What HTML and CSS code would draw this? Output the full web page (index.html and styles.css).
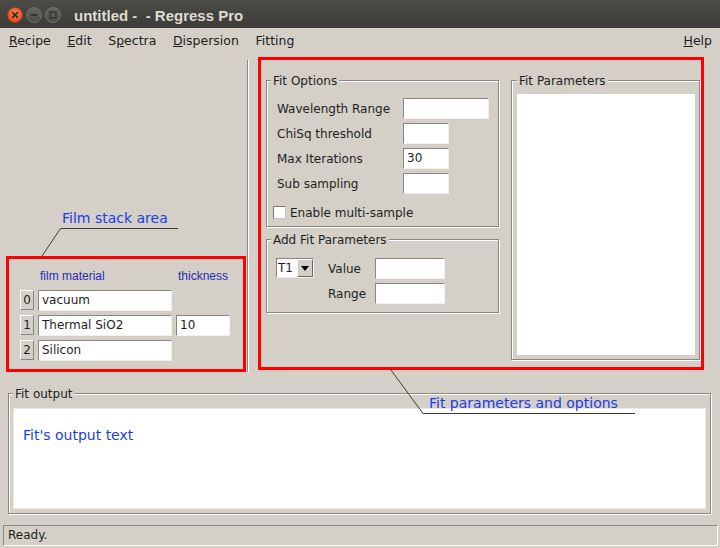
FILE: index.html
```html
<!DOCTYPE html>
<html>
<head>
<meta charset="utf-8">
<title>Regress Pro</title>
<link rel="stylesheet" href="styles.css">
</head>
<body>
<div class="window">
  <div class="titlebar">
    <div class="wbtns">
      <svg class="wbtn" viewBox="0 0 16 16">
        <defs>
          <radialGradient id="gc" cx="50%" cy="40%" r="60%">
            <stop offset="0" stop-color="#f4865a"/>
            <stop offset="1" stop-color="#dc4a18"/>
          </radialGradient>
          <linearGradient id="gg" x1="0" y1="0" x2="0" y2="1">
            <stop offset="0" stop-color="#65645f"/>
            <stop offset="1" stop-color="#4f4e4a"/>
          </linearGradient>
        </defs>
        <circle cx="8" cy="8" r="7.5" fill="url(#gc)" stroke="#b03d12" stroke-width="0.8"/>
        <path d="M5.6 5.6 L10.4 10.4 M10.4 5.6 L5.6 10.4" stroke="#3a2219" stroke-width="1.5" stroke-linecap="round"/>
      </svg>
      <svg class="wbtn" viewBox="0 0 16 16">
        <circle cx="8" cy="8" r="7.5" fill="url(#gg)" stroke="#77766f" stroke-width="0.8"/>
        <path d="M4.8 8 H11.2" stroke="#2f2e2b" stroke-width="1.8"/>
      </svg>
      <svg class="wbtn" viewBox="0 0 16 16">
        <circle cx="8" cy="8" r="7.5" fill="url(#gg)" stroke="#77766f" stroke-width="0.8"/>
        <rect x="5" y="5" width="6" height="6" fill="none" stroke="#2f2e2b" stroke-width="1.3"/>
      </svg>
    </div>
    <span class="title">untitled -&nbsp; - Regress Pro</span>
  </div>

  <div class="menubar">
    <span class="mi"><u>R</u>ecipe</span>
    <span class="mi"><u>E</u>dit</span>
    <span class="mi">S<u>p</u>ectra</span>
    <span class="mi"><u>D</u>ispersion</span>
    <span class="mi">Fitting</span>
    <span class="mi help"><u>H</u>elp</span>
  </div>

  <div class="main">
    <div class="left">
      <div class="stack redbox">
        <div class="stack-grid">
          <span></span><span class="hdr">film material</span><span class="hdr">thickness</span>
          <span class="idx">0</span><span class="entry">vacuum</span><span></span>
          <span class="idx">1</span><span class="entry">Thermal SiO2</span><span class="entry">10</span>
          <span class="idx">2</span><span class="entry">Silicon</span><span></span>
        </div>
      </div>
    </div>

    <div class="sep"></div>

    <div class="fit redbox">
      <div class="fit-col">
        <div class="group opts">
          <span class="gtitle">Fit Options</span>
          <div class="form">
            <span class="lbl">Wavelength Range</span><span class="entry w86"></span>
            <span class="lbl">ChiSq threshold</span><span class="entry w46"></span>
            <span class="lbl">Max Iterations</span><span class="entry w46">30</span>
            <span class="lbl">Sub sampling</span><span class="entry w46"></span>
          </div>
          <div class="check"><span class="cbox"></span><span>Enable multi-sample</span></div>
        </div>

        <div class="group addp">
          <span class="gtitle">Add Fit Parameters</span>
          <div class="add-grid">
            <div class="combo"><span class="combo-text">T1</span><span class="combo-btn"><span class="tri"></span></span></div>
            <span class="lbl">Value</span><span class="entry w70"></span>
            <span></span>
            <span class="lbl">Range</span><span class="entry w70"></span>
          </div>
        </div>
      </div>

      <div class="group params">
        <span class="gtitle">Fit Parameters</span>
        <div class="listbox"></div>
      </div>
    </div>
  </div>

  <div class="group output">
    <span class="gtitle">Fit output</span>
    <div class="textarea"><span class="outtext">Fit's output text</span></div>
  </div>

  <div class="status">Ready.</div>

  <svg class="lines" width="720" height="548" viewBox="0 0 720 548">
    <polyline points="178,228.5 60.5,228.5 42,256" fill="none" stroke="#3b3b3b" stroke-width="1"/>
    <polyline points="391,370 423,413.5 635,413.5" fill="none" stroke="#3b3b3b" stroke-width="1"/>
  </svg>
  <span class="annot a1">Film stack area</span>
  <span class="annot a2">Fit parameters and options</span>
</div>
</body>
</html>
```

FILE: styles.css
```css
* { box-sizing: border-box; }
html, body { margin: 0; padding: 0; }
body {
  background: #d4d0c8;
  font-family: "DejaVu Sans", sans-serif;
  font-size: 12px;
  color: #1e1e1e;
}
.window {
  position: relative;
  width: 720px;
  height: 548px;
  overflow: hidden;
  display: flex;
  flex-direction: column;
  background: #d4d0c8;
}

/* title bar */
.titlebar {
  height: 28px;
  flex: none;
  display: flex;
  align-items: center;
  padding: 2px 0 0 7px;
  background: linear-gradient(#4c4b46, #3c3b37);
}
.wbtns { display: flex; gap: 3px; }
.wbtn { display: block; width: 16px; height: 16px; }
.title {
  margin-left: 13px;
  font-family: "Liberation Sans", sans-serif;
  font-weight: bold;
  font-size: 15px;
  color: #dfdbd2;
  white-space: pre;
}

/* menu */
.menubar {
  height: 24px;
  flex: none;
  display: flex;
  align-items: center;
  gap: 16.6px;
  padding: 0 8px 0 9px;
  font-size: 12.5px;
  color: #1c1c1c;
}
.menubar .help { margin-left: auto; }

/* main */
.main {
  height: 328px;
  flex: none;
  display: flex;
  align-items: flex-start;
}
.left {
  width: 247px;
  height: 100%;
  display: flex;
  flex-direction: column;
  justify-content: flex-end;
  padding: 0 0 8px 6px;
}
.redbox { border: 3px solid #ff0000; }
.stack {
  width: 240px;
  height: 116px;
  padding: 10px 0 0 11px;
}
.stack-grid {
  display: grid;
  grid-template-columns: 14px 134px 54px;
  column-gap: 4px;
  row-gap: 4px;
}
.hdr {
  font-family: "Liberation Sans", sans-serif;
  font-size: 12px;
  line-height: 14px;
  color: #2a2ab0;
  padding-left: 2px;
  margin-bottom: 3px;
  white-space: nowrap;
}
.idx {
  height: 20px;
  border: 1px solid;
  border-color: #ffffff #8a8782 #8a8782 #ffffff;
  display: flex;
  align-items: center;
  justify-content: center;
  line-height: 1;
}
.entry {
  height: 21px;
  background: #ffffff;
  border: 1px solid;
  border-color: #8a8782 #f2f1ee #f2f1ee #8a8782;
  padding: 0 0 0 3px;
  line-height: 19px;
  white-space: nowrap;
}
.w86 { width: 86px; }
.w46 { width: 46px; }
.w70 { width: 70px; }

.sep {
  width: 2px;
  height: 312px;
  margin-top: 8px;
  border-left: 1px solid #8a8782;
  border-right: 1px solid #ffffff;
}

.fit {
  width: 446px;
  height: 313px;
  margin: 5px 0 0 9px;
  display: flex;
  gap: 12px;
  padding: 20px 1px 0 5px;
}
.fit-col {
  width: 233px;
  display: flex;
  flex-direction: column;
  gap: 12px;
}

/* group boxes */
.group {
  position: relative;
  border: 1px solid #8a8782;
  box-shadow: inset 1px 1px 0 #ffffff, 1px 1px 0 #ffffff;
}
.gtitle {
  position: absolute;
  top: -7px;
  left: 4px;
  padding: 0 2px;
  background: #d4d0c8;
  line-height: 14px;
  white-space: nowrap;
}
.params .gtitle { left: 5px; }
.opts {
  height: 147px;
  padding: 17px 0 0 10px;
}
.form {
  display: grid;
  grid-template-columns: 126px auto;
  grid-auto-rows: 21px;
  row-gap: 4px;
  align-items: center;
}
.form .entry { justify-self: start; }
.lbl { white-space: nowrap; }
.check {
  display: flex;
  align-items: center;
  gap: 4px;
  height: 15px;
  margin: 11px 0 0 -4px;
}
.cbox {
  width: 13px;
  height: 13px;
  background: #ffffff;
  border: 1px solid;
  border-color: #7c7a75 #c9c6c0 #c9c6c0 #7c7a75;
}

.addp {
  height: 74px;
  padding: 18px 0 0 9px;
}
.add-grid {
  display: grid;
  grid-template-columns: 52px 47px 70px;
  grid-auto-rows: 21px;
  row-gap: 4px;
  align-items: center;
}
.combo {
  align-self: start;
  display: flex;
  width: 38px;
  height: 20px;
  background: #ffffff;
  border: 1px solid;
  border-color: #8a8782 #f2f1ee #f2f1ee #8a8782;
}
.combo-text {
  flex: 1;
  padding-left: 1px;
  line-height: 18px;
}
.combo-btn {
  width: 16px;
  border: 1px solid;
  border-color: #ffffff #6d6b66 #6d6b66 #ffffff;
  background: #d4d0c8;
  display: flex;
  align-items: center;
  justify-content: center;
}
.tri {
  width: 0;
  height: 0;
  border-left: 4px solid transparent;
  border-right: 4px solid transparent;
  border-top: 5px solid #000000;
}

.params {
  width: 189px;
  height: 280px;
  padding: 13px 4px 4px 5px;
  display: flex;
}
.listbox {
  flex: 1;
  background: #ffffff;
}

/* output */
.output {
  flex: none;
  margin: 13px 0 0 8px;
  width: 703px;
  height: 121px;
  padding: 14px 4px 4px 4px;
}
.textarea {
  height: 100%;
  background: #ffffff;
  border: 1px solid #ebe9e4;
  padding: 18px 0 0 9px;
}
.outtext {
  color: #1a3ee6;
  font-size: 14px;
  line-height: 17px;
}

.status {
  flex: none;
  margin: 11px 0 0 3px;
  width: 715px;
  height: 21px;
  border: 1px solid;
  border-color: #8a8782 #ffffff #ffffff #8a8782;
  padding-left: 4px;
  line-height: 19px;
}

/* annotations */
.lines {
  position: absolute;
  top: 0;
  left: 0;
  pointer-events: none;
}
.annot {
  position: absolute;
  color: #1c3ce8;
  font-size: 14px;
  line-height: 17px;
  white-space: nowrap;
}
.a1 { left: 62px; top: 210px; }
.a2 { left: 429px; top: 395px; }
```
